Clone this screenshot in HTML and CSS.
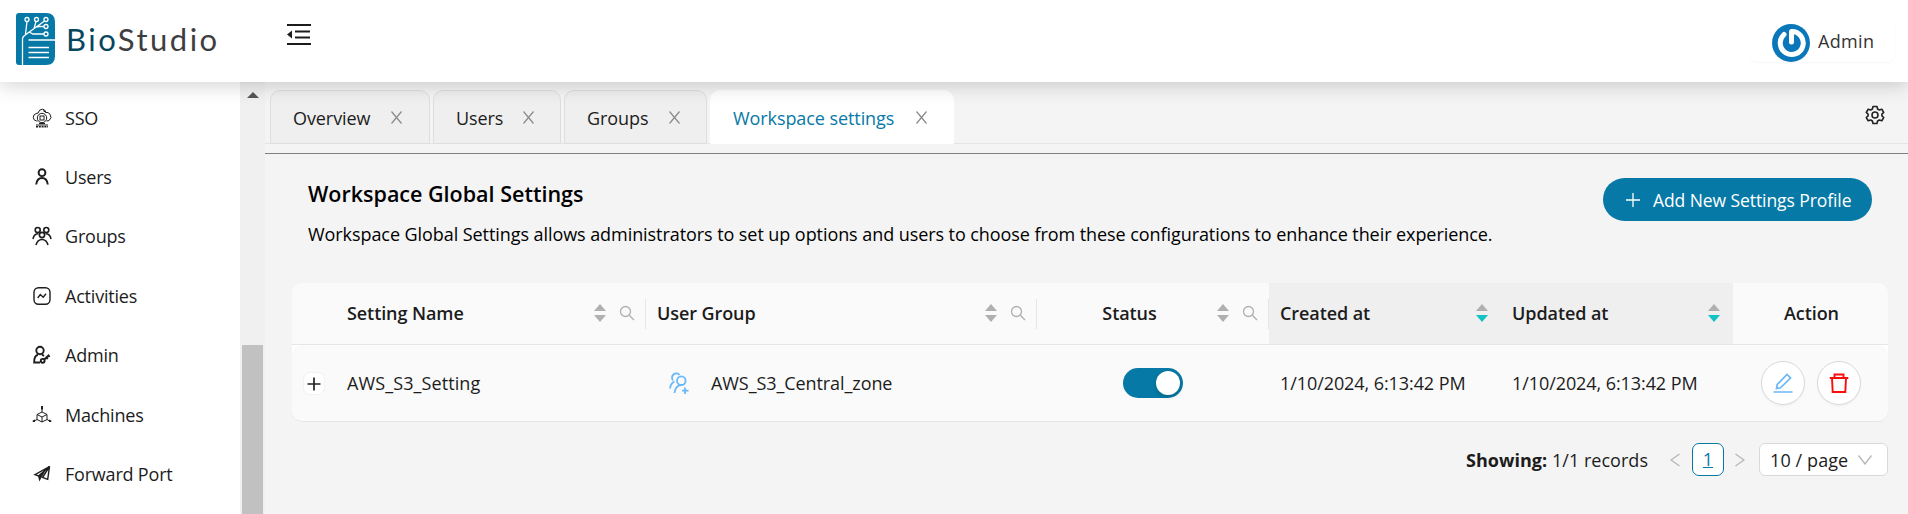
FILE: index.html
```html
<!DOCTYPE html>
<html lang="en">
<head>
<meta charset="utf-8">
<title>BioStudio</title>
<link rel="stylesheet" href="styles.css">
</head>
<body>
<header class="topbar">
  <div class="brand">
    <svg class="brand-mark" viewBox="0 0 39 52" width="39" height="52">
      <path d="M3 0H30Q39 0 39 9V43Q39 52 30 52H3Q0 52 0 49V3Q0 0 3 0Z" fill="#0779a6"/>
      <g fill="none" stroke="#fff" stroke-width="1.3">
        <path d="M6.500 52V26Q6.500 24 8.500 22.500L28.500 8M9.500 21L11 8.500M18 15.500L20 8.500M20 14L23 13.500H28M13 19L17 21H28M12.500 27H39" />
        <path d="M12.500 34.500H33M12.500 39.500H33M12.500 44.500H33"/>
        <circle cx="11" cy="6.500" r="2"/><circle cx="20.500" cy="6.500" r="2"/><circle cx="30" cy="6.500" r="2"/><circle cx="30" cy="13.500" r="2"/><circle cx="30" cy="21" r="2"/>
      </g>
    </svg>
    <span class="brand-name"><b>Bio</b>Studio</span>
  </div>
  <svg class="menu-fold" viewBox="0 0 24 22" width="24" height="22" fill="#1c1c1c">
    <path d="M0 0H24V2H0ZM8 6.500H23V8.500H8ZM8 12.500H23V14.500H8ZM0 19H24V21H0ZM0 10.500L5 6.500V14.500Z"/>
  </svg>
  <div class="account">
    <svg viewBox="0 0 38 38" width="38" height="38">
      <circle cx="19" cy="19" r="19" fill="#0b77bb"/>
      <path d="M12 10.500A11.500 11.500 0 1 0 19.500 7.500V18" fill="none" stroke="#fff" stroke-width="5" stroke-linecap="round" stroke-linejoin="round"/>
    </svg>
    <span>Admin</span>
  </div>
</header>
<div class="shell">
  <nav class="sidebar">
    <a class="nav-item"><svg viewBox="0 0 20 20" width="20" height="20"><g class="ln thin"><path d="M5.500 13H4.500A3.800 3.800 0 0 1 4 5.600Q5 5 6 5.200Q7 1.200 10.500 1.200Q13 1.200 14 4.500Q16 3.800 18 6.200Q20.500 10 17 12.600L14.500 13"/><circle cx="10" cy="10" r="4.700"/><rect x="8" y="8" width="4" height="4"/><path d="M11 2.500L14 4.500M7 15.500H13M4 17H16"/></g><path class="ln" stroke-dasharray="2 .8" d="M4 18.700H16"/></svg><span>SSO</span></a>
    <a class="nav-item"><svg viewBox="0 0 20 20" width="20" height="20"><g class="ln bold"><circle cx="10" cy="5.700" r="3.400"/><path d="M4.200 17.500Q5 11 10 11T15.800 17.500"/></g></svg><span>Users</span></a>
    <a class="nav-item"><svg viewBox="0 0 20 20" width="20" height="20"><g class="ln mid"><circle cx="5.700" cy="4" r="2.500"/><circle cx="14.300" cy="4" r="2.500"/><circle cx="10" cy="9" r="2.600"/><path d="M1 13Q2 7.500 6.500 7.700M19 13Q18 7.500 13.500 7.700M4 19Q5.500 13.500 10 13.500T16 19"/></g></svg><span>Groups</span></a>
    <a class="nav-item"><svg viewBox="0 0 20 20" width="20" height="20"><g class="ln"><rect x="2" y="1.800" width="16" height="16.400" rx="4.500"/><path d="M5.700 12L8.300 8.600L11.200 11.200L14 7.700"/></g></svg><span>Activities</span></a>
    <a class="nav-item"><svg viewBox="0 0 20 20" width="20" height="20"><g class="ln bold"><circle cx="8" cy="5.500" r="3.700"/><path d="M8 17.500H2.200Q2 10.500 6 9.700M10 9.500L12 11"/><circle cx="10.700" cy="15.800" r="1.900"/><path d="M12.200 14.500L16.500 10.500L17.500 12M14.500 12.700L15.700 14"/></g></svg><span>Admin</span></a>
    <a class="nav-item"><svg viewBox="0 0 20 20" width="20" height="20"><g class="ln thin"><path d="M10 7L15 9.500V14.500L10 17L5 14.500V9.500ZM5 9.500L10 12L15 9.500M10 12V17M10 7V2M5 14.500L1.500 16.500M15 14.500L18.500 16.500"/></g><path fill="#222" d="M9 1H11V4.500H9ZM.7 15.400L3 14.500V17H.7ZM19.300 15.400L17 14.500V17H19.300Z"/></svg><span>Machines</span></a>
    <a class="nav-item"><svg viewBox="0 0 20 20" width="20" height="20"><path class="ln" d="M17.500 2.500L3 10.700L6.500 12ZM17.500 2.500L15.700 15.300L10.500 13.500Z"/><path fill="#222" d="M6 12L14 6L9.800 13L7.300 17.500Z"/></svg><span>Forward Port</span></a>
  </nav>
  <div class="scrollbar"><i class="scroll-up"></i><i class="scroll-thumb"></i></div>
  <main class="main">
    <div class="tabs">
      <div class="tab t1"><span>Overview</span><svg class="x" viewBox="0 0 13 13" width="13" height="13"><path d="M1.500 .5L11.500 12.500M11.500 .5L1.500 12.500"/></svg></div>
      <div class="tab t2"><span>Users</span><svg class="x" viewBox="0 0 13 13" width="13" height="13"><path d="M1.500 .5L11.500 12.500M11.500 .5L1.500 12.500"/></svg></div>
      <div class="tab t3"><span>Groups</span><svg class="x" viewBox="0 0 13 13" width="13" height="13"><path d="M1.500 .5L11.500 12.500M11.500 .5L1.500 12.500"/></svg></div>
      <div class="tab t4 active"><span>Workspace settings</span><svg class="x" viewBox="0 0 13 13" width="13" height="13"><path d="M1.500 .5L11.500 12.500M11.500 .5L1.500 12.500"/></svg></div>
      <svg class="gear" viewBox="0 0 20 20" width="20" height="20"><path d="M8 1.500H12L12.600 4L14.300 5L16.800 4.200L18.700 7.500L16.900 9.200V10.800L18.700 12.500L16.800 15.800L14.300 15L12.600 16L12 18.500H8L7.400 16L5.700 15L3.200 15.800L1.300 12.500L3.100 10.800V9.200L1.300 7.500L3.200 4.200L5.700 5L7.400 4Z"/><circle cx="10" cy="10" r="3"/></svg>
    </div>
    <section class="intro">
      <div class="intro-text">
        <h1>Workspace Global Settings</h1>
        <p>Workspace Global Settings allows administrators to set up options and users to choose from these configurations to enhance their experience.</p>
      </div>
      <button class="add"><svg viewBox="0 0 16 16" width="16" height="16"><path d="M8 1V15M1 8H15"/></svg><span>Add New Settings Profile</span></button>
    </section>
    <section class="grid">
      <div class="row head">
        <div></div>
        <div class="cell split"><span class="grow">Setting Name</span><i class="sort"></i><svg class="find" viewBox="0 0 16 16" width="16" height="16"><circle cx="6.500" cy="6.500" r="5"/><path d="M10.200 10.200L15 15"/></svg></div>
        <div class="cell split"><span class="grow">User Group</span><i class="sort"></i><svg class="find" viewBox="0 0 16 16" width="16" height="16"><circle cx="6.500" cy="6.500" r="5"/><path d="M10.200 10.200L15 15"/></svg></div>
        <div class="cell split"><span class="grow center status">Status</span><i class="sort"></i><svg class="find" viewBox="0 0 16 16" width="16" height="16"><circle cx="6.500" cy="6.500" r="5"/><path d="M10.200 10.200L15 15"/></svg></div>
        <div class="cell sorted"><span class="grow">Created at</span><i class="sort down"></i></div>
        <div class="cell sorted"><span class="grow">Updated at</span><i class="sort down"></i></div>
        <div class="cell action-title"><span class="grow center">Action</span></div>
      </div>
      <div class="underlay"><div class="row body">
        <div class="expand"><button><svg viewBox="0 0 14 14" width="14" height="14"><path d="M7 0.500V13.500M.5 7H13.500"/></svg></button></div>
        <div class="cell"><span class="name">AWS_S3_Setting</span></div>
        <div class="cell group"><svg viewBox="0 0 20 24" width="20" height="24"><g fill="none" stroke="#69b8f8" stroke-width="1.800"><circle cx="12.300" cy="9.700" r="4.300"/><path d="M5.500 22Q6.500 14.500 12 14.200M4 9.500A4.200 4.200 0 1 1 10.500 4M1 17.500Q1.500 12.500 5.500 10.500M16 16.500V23M13 19.700H19.500"/></g></svg><span class="zone">AWS_S3_Central_zone</span></div>
        <div class="cell"><span class="switch"></span></div>
        <div class="cell"><span class="date">1/10/2024, 6:13:42 PM</span></div>
        <div class="cell"><span class="date">1/10/2024, 6:13:42 PM</span></div>
        <div class="actions">
          <button><svg viewBox="0 0 20 20" width="20" height="20" fill="none" stroke="#69b8f8" stroke-width="1.700"><path d="M.5 19H19.500M3.500 15.500L4.200 11.500L14 1.500L17.500 5L7.500 14.800Z"/></svg></button>
          <button><svg viewBox="0 0 20 20" width="20" height="20" fill="none" stroke="#fb0d0d" stroke-width="1.900"><path d="M.7 5H19.300M5.500 5V1.500H14.500V5M3 5L3.700 19H16.300L17 5"/></svg></button>
        </div>
      </div></div>
    </section>
    <footer class="pager">
      <span class="count"><b>Showing:</b> 1/1 records</span>
      <svg class="arrow" viewBox="0 0 10 14" width="10" height="14"><path d="M9.500 1L1 7L9.500 13"/></svg>
      <span class="page">1</span>
      <svg class="arrow" viewBox="0 0 10 14" width="10" height="14"><path d="M.5 1L9 7L.5 13"/></svg>
      <div class="size"><span>10 / page</span><svg class="arrow" viewBox="0 0 14 10" width="14" height="10"><path d="M.5 .5L7 9L13.500 .5"/></svg></div>
    </footer>
  </main>
</div>
</body>
</html>
```
FILE: styles.css
```css
* { box-sizing: border-box; }
body { margin: 0; height: 514px; overflow: hidden; display: flex; flex-direction: column; font: 18px/24px "Open Sans", "Noto Sans", sans-serif; color: #1c1c1c; letter-spacing: -.08px; background: #f4f4f4; }
svg { flex: none; display: block; }
button { font: inherit; letter-spacing: inherit; padding: 0; margin: 0; border: 0; }
.topbar { height: 82px; flex: none; background: #fff; display: flex; align-items: flex-start; box-shadow: 0 2px 20px rgba(0,0,0,.2); z-index: 2; }
.brand { width: 287px; padding: 13px 0 0 16px; display: flex; }
.brand-name { font: 31px/52px Lato, sans-serif; letter-spacing: 2.500px; color: #3e3e40; padding-left: 11px; }
.brand-name b { font-weight: 400; color: #07465f; }
.menu-fold { margin-top: 24px; }
.account { margin: 20px 13px 0 auto; width: 145px; height: 42px; padding: 4px 0 0 22px; display: flex; gap: 8px; border-radius: 8px; box-shadow: 0 1px 2px rgba(0,0,0,.04); font-size: 18px; font-weight: 500; letter-spacing: .35px; line-height: 34px; color: #333; }
.shell { flex: 1; display: flex; min-height: 0; }
.sidebar { width: 240px; background: #fff; padding-top: 6px; letter-spacing: -.2px; }
.nav-item { height: 59.400px; display: flex; align-items: center; gap: 13px; padding-left: 32px; }
.ln { fill: none; stroke: #1d1d1d; stroke-width: 1.4; }
.thin { stroke-width: 1; }
.mid { stroke-width: 1.6; }
.bold { stroke-width: 1.9; }
.scrollbar { width: 25px; background: #f0f0f0; display: flex; flex-direction: column; align-items: center; }
.scroll-up { margin-top: 10px; border: 6px solid transparent; border-top: 0; border-bottom: 6px solid #555; }
.scroll-thumb { width: 21px; margin-top: 247px; flex: 1; background: #c1c1c1; }
.main { flex: 1; min-width: 0; }
.tabs { height: 72px; border-bottom: 1px solid #808080; padding: 8px 0 0 5px; display: flex; background: linear-gradient(#e4e4e4,#e4e4e4) 0 61px / 100% 1px no-repeat; }
.tab { height: 54px; background: #efefef; border: 1px solid #dedede; border-radius: 10px 10px 0 0; padding: 1px 22px 0; margin-right: 3px; display: flex; align-items: center; justify-content: space-between; white-space: nowrap; }
.x { fill: none; stroke: #8a8a8a; stroke-width: 1.2; margin-bottom: 1px; }
.t1 { width: 160px; padding-right: 26px; }
.t2 { width: 128px; padding-right: 25px; }
.t3 { width: 143px; padding-right: 25px; }
.t4 { width: 244px; padding-right: 25px; }
.active { background: #fff; border-color: #fff; color: #0779a6; }
.gear { fill: none; stroke: #222; stroke-width: 1.6; stroke-linejoin: round; margin: 15px 23px 0 auto; }
.intro { height: 129px; padding: 24px 36px 0 43px; display: flex; justify-content: space-between; align-items: flex-start; color: #000; }
h1 { font-size: 21.500px; line-height: 30px; font-weight: 600; margin: 1px 0 0; letter-spacing: 0; }
p { margin: 13px 0 0; white-space: nowrap; letter-spacing: -.07px; }
.intro-text { width: 1190px; }
.add { width: 269px; height: 43px; border-radius: 22px; background: #0779a6; color: #fff; display: flex; align-items: center; padding-left: 22px; gap: 12px; white-space: nowrap; font-size: 17.500px; }
.add svg { fill: none; stroke: #fff; stroke-width: 1.3; }
.grid { margin: 0 20px 0 27px; }
.row { display: grid; grid-template-columns: 44px 310px 391px 232px 232px 232px 155px; }
.head { height: 62px; background: #fafafa; border-bottom: 1px solid #e6e6e6; border-radius: 10px 10px 0 0; font-weight: 600; }
.cell { display: flex; align-items: center; padding: 0 13px 0 11px; white-space: nowrap; }
.head .cell { padding-bottom: 1px; }
.head .split { padding-right: 11px; background: linear-gradient(#e6e6e6,#e6e6e6) 100% 16px / 1px 30px no-repeat; }
.head .action-title { padding-left: 13px; padding-right: 11px; }
.grow { flex: 1; }
.center { text-align: center; }
.status { padding-right: 6px; }
.sorted { background: #efefef; }
.sort { width: 12px; height: 18px; display: flex; flex-direction: column; justify-content: space-between; color: #b0b0b0; }
.sort::before, .sort::after { content: ""; border: 6px solid transparent; border-top: 0; border-bottom: 7px solid #b0b0b0; }
.sort::after { border-bottom: 0; border-top: 7px solid currentColor; }
.down { color: #13c2c2; }
.find { fill: none; stroke: #b0b0b0; stroke-width: 1.3; margin-left: 13px; }
.underlay { background: linear-gradient(#fff 0 14px, transparent 14px); }
.body { height: 77px; background: #fafafa; border-radius: 10px; border-bottom: 1px solid #e6e6e6; }
.expand { padding: 28px 0 0 12px; }
.expand button { width: 20px; height: 21px; border-radius: 6px; background: #fff; box-shadow: 0 0 1px 1px #f2f2f2; display: grid; place-items: center; }
.expand svg { stroke: #222; stroke-width: 1.7; }
.group { padding-left: 23px; gap: 22px; }
.name { letter-spacing: .1px; }
.switch { width: 60px; height: 30px; border-radius: 15px; background: #0779a6; margin-left: 75px; padding: 3px; display: flex; justify-content: flex-end; }
.switch::after { content: ""; width: 24px; height: 24px; border-radius: 50%; background: #fff; box-shadow: 0 2px 4px rgba(0,35,11,.2); }
.actions { display: flex; gap: 12px; padding: 16px 0 0 28px; }
.actions button { width: 44px; height: 44px; border-radius: 50%; background: #fff; border: 1px solid #d9d9d9; box-shadow: 0 2px 2px rgba(0,0,0,.03); display: grid; place-items: center; }
.pager { display: flex; align-items: center; height: 33px; margin: 21px 20px 0 0; justify-content: flex-end; letter-spacing: .03px; }
.arrow { fill: none; stroke: #b5b5b5; stroke-width: 1.3; }
.count { margin-right: 22px; }
.page { width: 32px; height: 33px; line-height: 31px; text-align: center; margin: 0 11px 0 12px; background: #fff; border: 1px solid #0779a6; border-radius: 7px; color: #0779a6; text-decoration: underline; }
.size { width: 129px; height: 33px; margin-left: 14px; padding: 0 15px 0 10px; background: #fff; border: 1px solid #d9d9d9; border-radius: 6px; display: flex; align-items: center; justify-content: space-between; letter-spacing: .1px; }
```
